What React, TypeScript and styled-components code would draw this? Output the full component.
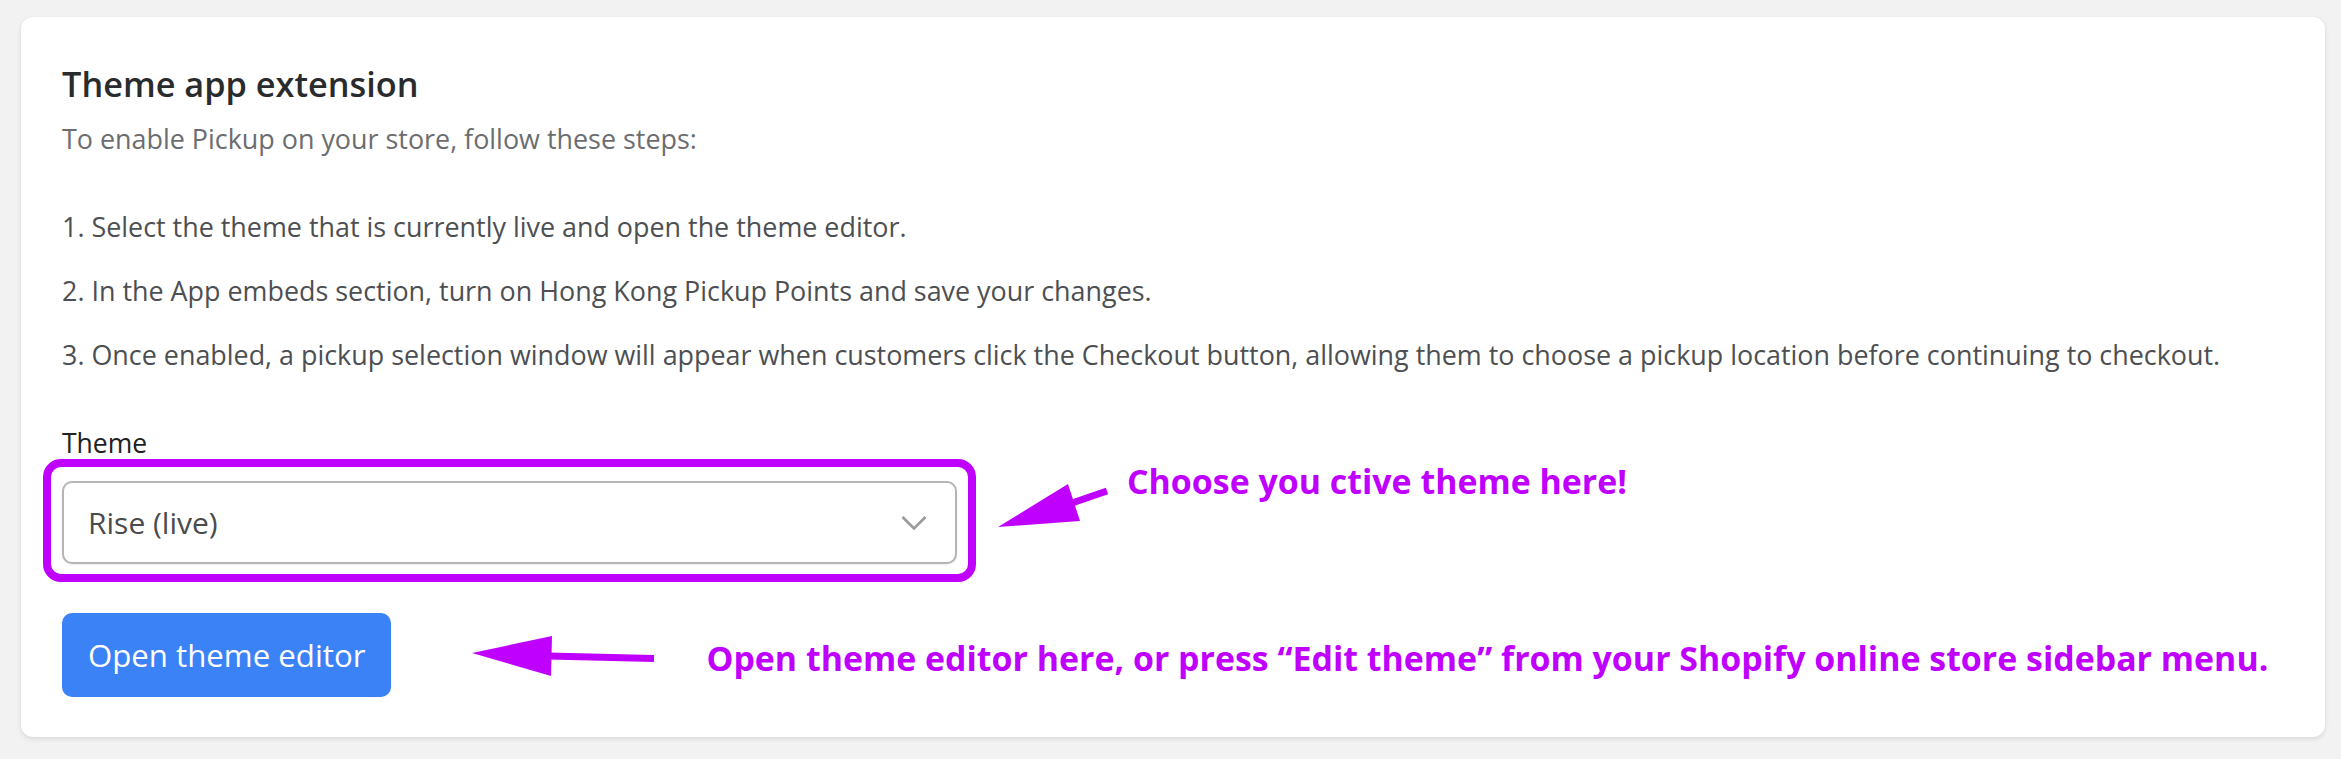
import React from "react";
import styled, { createGlobalStyle } from "styled-components";

const GlobalStyle = createGlobalStyle`
  html, body {
    margin: 0;
    padding: 0;
    background: #f2f2f2;
  }
  body {
    font-family: "Open Sans", "Noto Sans", Arial, sans-serif;
    -webkit-font-smoothing: antialiased;
  }
  * { box-sizing: border-box; }
`;

const Page = styled.div`
  padding: 17px 16px 22px 21px;
`;

const Card = styled.section`
  width: 2304px;
  background: #ffffff;
  border-radius: 12px;
  box-shadow: 0 2px 5px rgba(0, 0, 0, 0.1), 0 0 1px rgba(0, 0, 0, 0.06);
  padding: 47px 41px 40px 41px;
  display: flex;
  flex-direction: column;
`;

const Title = styled.h2`
  margin: 0;
  font-size: 34.3px;
  line-height: 40px;
  font-weight: 600;
  color: #2a2b2c;
`;

const Subtitle = styled.p`
  margin: 18px 0 0 0;
  font-size: 26.9px;
  line-height: 34px;
  color: #6b6d70;
`;

const Steps = styled.ol`
  list-style: none;
  margin: 54px 0 0 0;
  padding: 0;
  display: flex;
  flex-direction: column;
  gap: 30px;
`;

const Step = styled.li`
  font-size: 26.9px;
  line-height: 34px;
  color: #4d4f52;
`;

const Label = styled.label`
  margin-top: 54px;
  font-size: 26.5px;
  line-height: 34px;
  font-weight: 500;
  color: #202223;
`;

const Row = styled.div<{ $align: string; $mt: number }>`
  display: flex;
  align-items: ${(p) => p.$align};
  margin-top: ${(p) => p.$mt}px;
`;

const SelectWrap = styled.div`
  position: relative;
  width: 895px;
`;

const Highlight = styled.div`
  position: absolute;
  top: -22px;
  left: -19px;
  right: -19px;
  bottom: -18px;
  border: 8px solid #c000ff;
  border-radius: 18px;
  pointer-events: none;
`;

const SelectBox = styled.div`
  height: 83px;
  display: flex;
  align-items: center;
  justify-content: space-between;
  padding: 0 28px 0 24px;
  border: 2px solid #b5b5b5;
  border-radius: 10px;
  background: #ffffff;
  box-shadow: 0 1px 2px rgba(0, 0, 0, 0.08);
  font-size: 30px;
  color: #4a4b4d;
`;

const Chevron = styled.svg`
  width: 26px;
  height: 16px;
  flex: none;
`;

const Button = styled.button`
  height: 84px;
  padding: 0 26px;
  border: none;
  border-radius: 10px;
  background: #3b82f6;
  color: #ffffff;
  font-family: "Open Sans", "Noto Sans", Arial, sans-serif;
  font-size: 31.2px;
  font-weight: 400;
  cursor: pointer;
`;

const Arrow = styled.svg<{ $ml: number; $mt: number }>`
  flex: none;
  margin-left: ${(p) => p.$ml}px;
  margin-top: ${(p) => p.$mt}px;
`;

const Note = styled.span<{ $ml: number; $mt: number }>`
  margin-left: ${(p) => p.$ml}px;
  margin-top: ${(p) => p.$mt}px;
  font-family: "Open Sans", "Noto Sans", Arial, sans-serif;
  font-size: 33.9px;
  line-height: 36px;
  font-weight: 700;
  color: #c000ff;
  white-space: nowrap;
`;

export default function App() {
  return (
    <>
      <GlobalStyle />
      <Page>
        <Card>
          <Title>Theme app extension</Title>
          <Subtitle>To enable Pickup on your store, follow these steps:</Subtitle>
          <Steps>
            <Step>1. Select the theme that is currently live and open the theme editor.</Step>
            <Step>2. In the App embeds section, turn on Hong Kong Pickup Points and save your changes.</Step>
            <Step>
              3. Once enabled, a pickup selection window will appear when customers click the Checkout
              button, allowing them to choose a pickup location before continuing to checkout.
            </Step>
          </Steps>
          <Label>Theme</Label>
          <Row $align="flex-start" $mt={21}>
            <SelectWrap>
              <SelectBox role="combobox" aria-expanded="false">
                <span>Rise (live)</span>
                <Chevron viewBox="0 0 26 16">
                  <polyline
                    points="1.5,2 13,13.5 24.5,2"
                    fill="none"
                    stroke="#9a9a9a"
                    strokeWidth="2.6"
                  />
                </Chevron>
              </SelectBox>
              <Highlight />
            </SelectWrap>
            <Arrow $ml={33} $mt={-5} width="122" height="60" viewBox="0 0 122 60">
              <polygon points="8,51 78,8 90,45" fill="#c000ff" />
              <line x1="82" y1="27" x2="117" y2="15" stroke="#c000ff" strokeWidth="7" />
            </Arrow>
            <Note $ml={15} $mt={-18}>Choose you ctive theme here!</Note>
          </Row>
          <Row $align="center" $mt={49}>
            <Button>Open theme editor</Button>
            <Arrow $ml={77} $mt={0} width="190" height="50" viewBox="0 0 190 50">
              <polygon points="4,23 84,6 83,46" fill="#c000ff" />
              <line x1="80" y1="26" x2="186" y2="28.5" stroke="#c000ff" strokeWidth="7" />
            </Arrow>
            <Note $ml={48} $mt={6}>
              Open theme editor here, or press “Edit theme” from your Shopify online store sidebar menu.
            </Note>
          </Row>
        </Card>
      </Page>
    </>
  );
}
